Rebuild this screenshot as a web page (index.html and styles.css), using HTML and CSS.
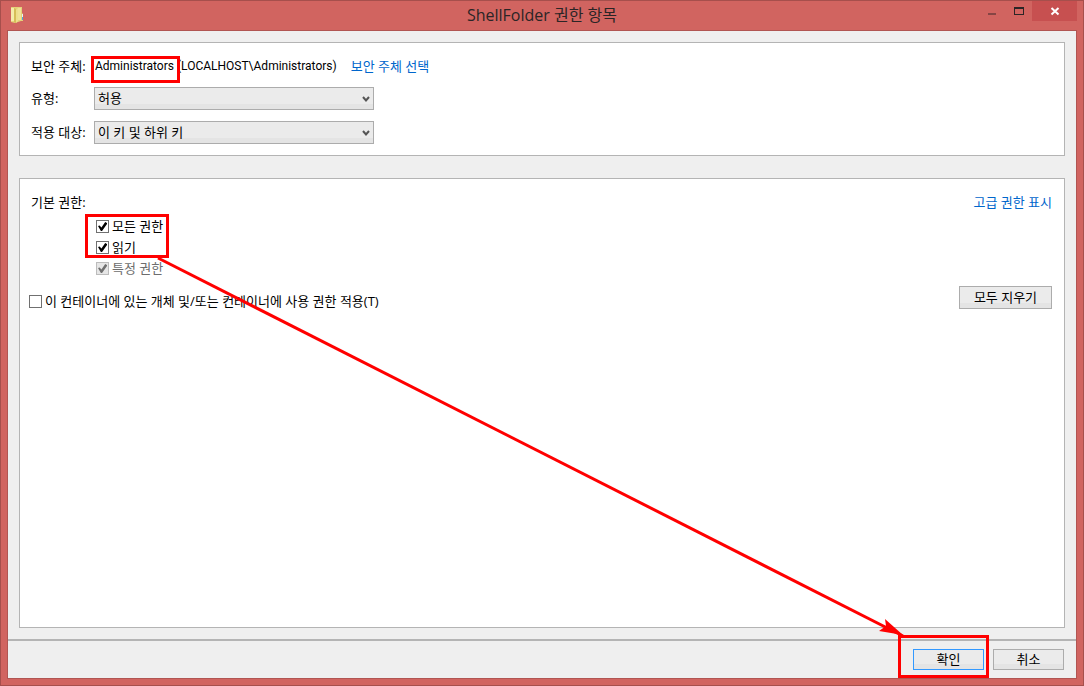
FILE: index.html
```html
<!DOCTYPE html>
<html lang="ko">
<head>
<meta charset="utf-8">
<title>ShellFolder 권한 항목</title>
<link rel="stylesheet" href="styles.css">
</head>
<body>
<div class="window">
  <header class="titlebar">
    <svg class="folder" width="14" height="16" viewBox="0 0 14 16" aria-hidden="true">
      <path d="M1 0H12V6L13 7V14H11L5 16L1 15Z" fill="#e4d27a"/>
      <path d="M1 1H4V14H1Z" fill="#f5ecaa"/>
      <path d="M4 1L6 2V16L4 15Z" fill="#d6bd58"/>
      <path d="M6 3L8 1V14L6 16Z" fill="#eedf8c"/>
      <path d="M8 1H11V13H8Z" fill="#f0e296"/>
      <path d="M12 9H13V13H12Z" fill="#4aa5df"/>
      <path d="M12 7H13V10H12Z" fill="#e8f3f6"/>
    </svg>
    <h1 class="title">ShellFolder 권한 항목</h1>
    <div class="controls">
      <button class="control" type="button" aria-label="최소화"><svg width="10" height="10" viewBox="0 0 10 10"><path d="M1 7H9V9H1Z" fill="#864544"/></svg></button>
      <button class="control" type="button" aria-label="최대화"><svg width="10" height="10" viewBox="0 0 10 10"><path d="M0 1H10V9H0ZM1 3V8H9V3Z" fill="#2b2526" fill-rule="evenodd"/></svg></button>
      <button class="control close" type="button" aria-label="닫기"><svg width="10" height="10" viewBox="0 0 10 10"><path d="M1.500 2L8.500 8.500M8.500 2L1.500 8.500" stroke="#fff" stroke-width="2"/></svg></button>
    </div>
  </header>
  <main class="client">
    <div class="content">
      <section class="panel principal">
        <span class="label">보안 주체:</span>
        <div class="identity"><span class="latin"><span class="marked name">Administrators</span> (LOCALHOST\Administrators)</span><a class="link" href="#">보안 주체 선택</a></div>
        <label class="label" for="type">유형:</label>
        <div class="dropdown">
          <select id="type"><option>허용</option></select>
          <svg class="chevron" width="8" height="7" viewBox="0 0 8 7"><path d="M1 1L4 4.500L7 1" fill="none" stroke="#555" stroke-width="2"/></svg>
        </div>
        <label class="label" for="scope">적용 대상:</label>
        <div class="dropdown">
          <select id="scope"><option>이 키 및 하위 키</option></select>
          <svg class="chevron" width="8" height="7" viewBox="0 0 8 7"><path d="M1 1L4 4.500L7 1" fill="none" stroke="#555" stroke-width="2"/></svg>
        </div>
      </section>
      <section class="panel permissions">
        <div class="heading"><span class="label">기본 권한:</span><a class="link" href="#">고급 권한 표시</a></div>
        <div class="options">
          <div class="marked granted">
            <label class="option"><input type="checkbox" checked>모든 권한</label>
            <label class="option"><input type="checkbox" checked>읽기</label>
          </div>
          <label class="option disabled"><input type="checkbox" checked disabled>특정 권한</label>
        </div>
        <div class="inherit">
          <label class="option apply"><input type="checkbox">이 컨테이너에 있는 개체 및/또는 컨테이너에 사용 권한 적용(T)</label>
          <button class="button wide" type="button">모두 지우기</button>
        </div>
      </section>
    </div>
    <footer class="footer">
      <span class="marked confirm"><button class="button default" type="button">확인</button></span>
      <button class="button" type="button">취소</button>
    </footer>
  </main>
  <div class="arrow" aria-hidden="true">
    <svg class="shaft" viewBox="0 0 100 100" preserveAspectRatio="none"><path d="M0 0L100 100" vector-effect="non-scaling-stroke"/></svg>
    <svg class="head" width="26" height="18" viewBox="0 0 26 18"><path d="M26 17L8 1L9 8L2 13Z"/></svg>
  </div>
</div>
</body>
</html>
```
FILE: styles.css
```css
* { box-sizing: border-box; }

body {
  margin: 0;
  font: 13px/19px "Open Sans", "Noto Sans CJK KR", sans-serif;
  color: #000;
}

button, select { font: inherit; color: inherit; }

.window {
  position: relative;
  display: flex;
  flex-direction: column;
  min-height: 100vh;
  padding: 0 6px 6px;
  border: 1px solid #a64f4c;
  background: #d16460;
}

.titlebar {
  display: grid;
  grid-template-columns: 1fr auto 1fr;
  height: 29px;
}

.folder { margin: 6px 0 0 3px; }

.title {
  margin: 0;
  font-size: 16px;
  font-weight: 400;
  line-height: 28px;
  color: #2b2526;
}

.controls {
  display: flex;
  justify-content: flex-end;
}

.control {
  display: grid;
  place-items: center;
  width: 27px;
  height: 20px;
  padding: 0;
  border: 0;
  background: none;
}

.close {
  width: 45px;
  background: #c75050;
}

.client {
  flex: 1;
  display: flex;
  flex-direction: column;
  border: 1px solid #b15552;
  background: #efefef;
}

.content {
  flex: 1;
  display: flex;
  flex-direction: column;
  gap: 22px;
  padding: 11px;
}

.panel {
  border: 1px solid #b4b4b4;
  background: #fff;
}

.principal {
  display: grid;
  grid-template-columns: 63px 1fr;
  grid-template-rows: 19px 23px 23px;
  gap: 11px 0;
  align-items: center;
  padding: 14px 11px 11px;
}

.label { white-space: nowrap; }

.identity {
  display: flex;
  gap: 14px;
  padding-left: 1px;
}

.latin { font-family: Roboto, sans-serif; font-size: 12px; }

.link {
  color: #0066cc;
  text-decoration: none;
}

.dropdown {
  position: relative;
  width: 280px;
  height: 23px;
}

.dropdown select {
  appearance: none;
  display: block;
  width: 100%;
  height: 100%;
  padding: 0 20px 0 3px;
  border: 1px solid #acacac;
  border-radius: 0;
  background: linear-gradient(#ebebeb 75%, #e4e4e4 75%);
}

.chevron {
  position: absolute;
  top: 9px;
  right: 4px;
  pointer-events: none;
}

.permissions {
  flex: 1;
  padding: 14px 12px 12px 9px;
}

.heading {
  display: flex;
  justify-content: space-between;
  padding-left: 2px;
}

.options {
  width: max-content;
  margin: 4px 0 7px 67px;
}

.option {
  display: flex;
  align-items: center;
  gap: 3px;
  height: 21px;
}

.disabled { color: #6d6d6d; }

.option input {
  appearance: none;
  flex: none;
  display: grid;
  place-items: center;
  width: 13px;
  height: 13px;
  margin: 0;
  border: 1px solid #707070;
  background: #fff;
}

.option input:checked::before {
  content: "";
  width: 9px;
  height: 9px;
  background: #000;
  clip-path: polygon(0 45%, 18% 38%, 38% 62%, 80% 0, 100% 10%, 100% 22%, 45% 100%, 32% 100%);
}

.option input:disabled {
  border-color: #bcbcbc;
  background: #e6e6e6;
}

.option input:disabled::before { background: #707070; }

.inherit {
  display: flex;
  justify-content: space-between;
  align-items: flex-end;
}

.apply { height: 15px; }

.button {
  width: 71px;
  height: 21px;
  padding: 0;
  border: 1px solid #acacac;
  background: linear-gradient(#ebebeb 75%, #e4e4e4 75%);
  line-height: 17px;
}

.wide {
  width: 93px;
  height: 23px;
}

.default { border-color: #3399ff; }

.footer {
  display: flex;
  justify-content: flex-end;
  gap: 9px;
  padding: 8px 12px;
  border-top: 2px solid #b4b4b4;
}

.confirm { display: flex; }

/* Red callouts */
.marked { position: relative; }

.marked::after {
  content: "";
  position: absolute;
  border: 3px solid #f00;
  pointer-events: none;
}

.name::after { inset: -3px -6px -10px -4px; }
.granted::after { inset: -2px -6px 0 -11px; }
.confirm::after { inset: -14px -5px -8px -15px; }

.arrow {
  position: absolute;
  inset: 257px 180px 49px 157px;
  pointer-events: none;
}

.shaft {
  display: block;
  width: 100%;
  height: 100%;
  overflow: visible;
  fill: none;
  stroke: #f00;
  stroke-width: 3px;
}

.head {
  position: absolute;
  right: 0;
  bottom: 0;
  fill: #f00;
}
```
